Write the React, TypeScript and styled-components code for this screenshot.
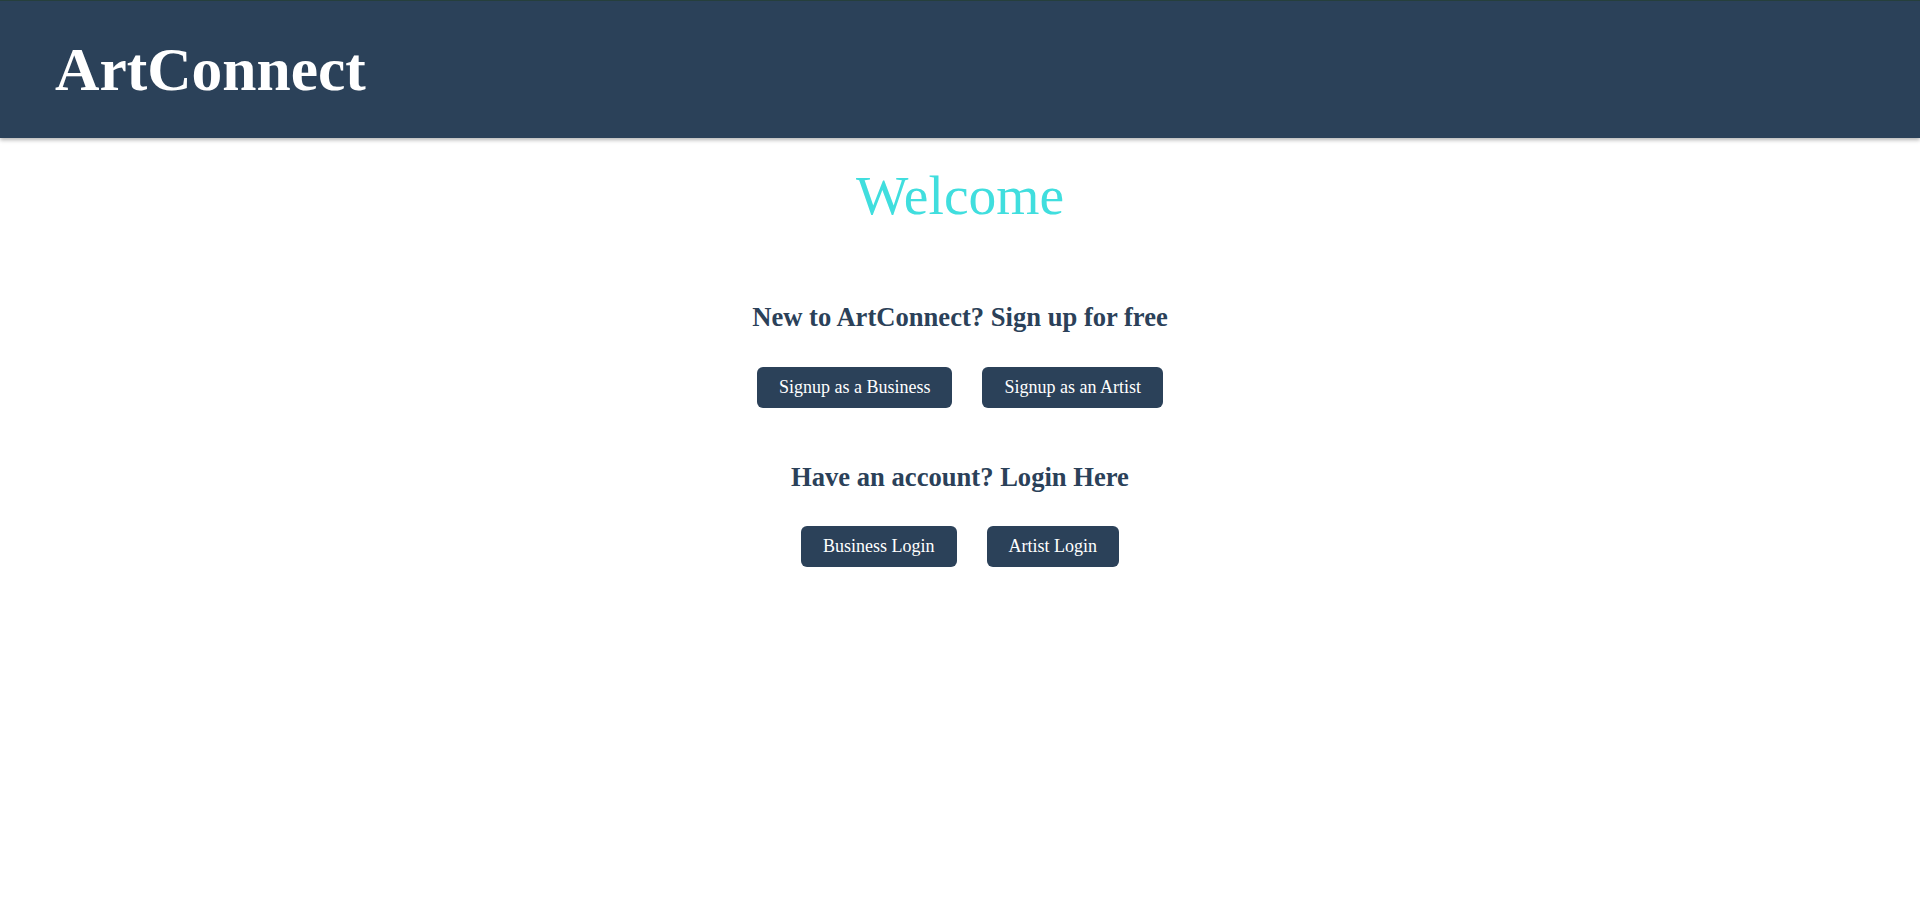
import React from "react";
import styled, { createGlobalStyle } from "styled-components";

const Global = createGlobalStyle`
  html, body { margin: 0; padding: 0; background: #ffffff; }
  body { font-family: "Liberation Serif", "DejaVu Serif", serif; }
`;

const Page = styled.div`
  display: flex;
  flex-direction: column;
  min-height: 913px;
`;

const Header = styled.header`
  height: 137px;
  border-top: 1px solid #263f3c;
  background: #2b4159;
  box-shadow: 0 2px 4px rgba(0, 0, 0, 0.3);
  display: flex;
  align-items: center;
  padding-left: 55px;
`;

const Brand = styled.h1`
  margin: 0;
  color: #ffffff;
  font-size: 61.5px;
  font-weight: 700;
  line-height: 1;
`;

const Main = styled.main`
  display: flex;
  flex-direction: column;
  align-items: center;
`;

const Welcome = styled.h2`
  margin: 25px 0 0;
  color: #40dede;
  font-size: 55.5px;
  font-weight: 400;
  line-height: 1.2;
`;

const Section = styled.section<{ $top: number }>`
  display: flex;
  flex-direction: column;
  align-items: center;
  margin-top: ${(p) => p.$top}px;
`;

const Prompt = styled.h3`
  margin: 0;
  color: #2b4159;
  font-size: 26.6px;
  font-weight: 700;
  line-height: 1.2;
`;

const ButtonRow = styled.div`
  display: flex;
  gap: 30px;
  margin-top: 33px;
`;

const Button = styled.button`
  height: 41px;
  padding: 0 22px;
  border: none;
  border-radius: 6px;
  background: #2b4159;
  color: #ffffff;
  font-family: "Liberation Serif", "DejaVu Serif", serif;
  font-size: 18px;
  cursor: pointer;
`;

export default function App() {
  return (
    <>
      <Global />
      <Page>
        <Header>
          <Brand>ArtConnect</Brand>
        </Header>
        <Main>
          <Welcome>Welcome</Welcome>
          <Section $top={72}>
            <Prompt>New to ArtConnect? Sign up for free</Prompt>
            <ButtonRow>
              <Button>Signup as a Business</Button>
              <Button>Signup as an Artist</Button>
            </ButtonRow>
          </Section>
          <Section $top={54}>
            <Prompt>Have an account? Login Here</Prompt>
            <ButtonRow>
              <Button>Business Login</Button>
              <Button>Artist Login</Button>
            </ButtonRow>
          </Section>
        </Main>
      </Page>
    </>
  );
}
